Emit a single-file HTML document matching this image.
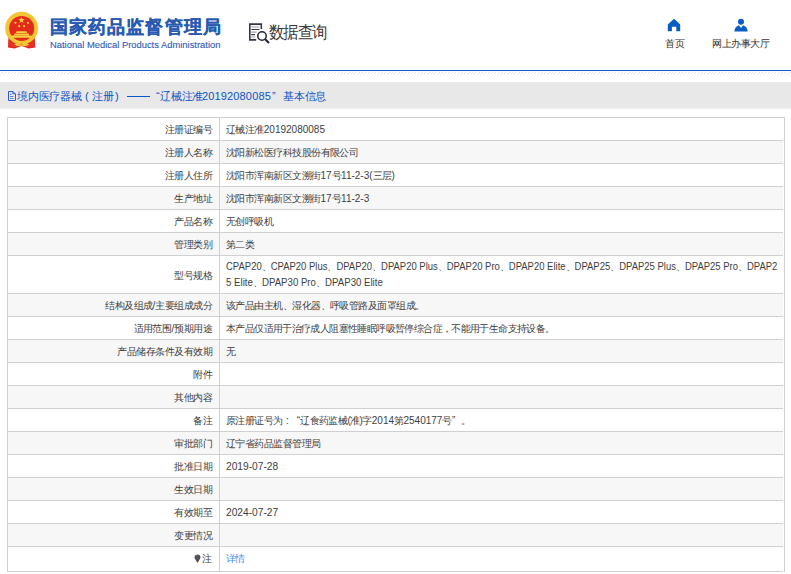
<!DOCTYPE html>
<html><head><meta charset="utf-8">
<style>
*{margin:0;padding:0;box-sizing:border-box}
html,body{width:791px;height:574px;overflow:hidden;background:#fff}
body{position:relative;font-family:"Liberation Sans",sans-serif;color:#333}
.abs{position:absolute;white-space:nowrap}
#icons{position:absolute;left:0;top:0;z-index:5}
#t1{left:50px;top:13px;font-size:18px;letter-spacing:1.1px;font-weight:bold;color:#275ab0;-webkit-text-stroke:0.2px #275ab0;line-height:28px}
#t2{left:50px;top:39px;font-size:9.4px;color:#2d5cb0;-webkit-text-stroke:0.12px #2d5cb0;line-height:12px}
#sq{left:269px;top:19.5px;font-size:15px;letter-spacing:-0.7px;color:#3a3a3a;line-height:22px;transform:scaleY(1.1);transform-origin:0 0}
.nav{font-size:9.5px;color:#333;line-height:12px}
.nav i{letter-spacing:-0.45px}
#bar{position:absolute;left:0;top:82px;width:791px;height:26px;background:#e8e8e8;border-bottom:1px solid #eef0f4;box-sizing:content-box}
#bartxt span,#bartxt b{position:absolute;top:89px;white-space:nowrap;font-size:11px;letter-spacing:-0.25px;color:#0a55c8;line-height:15px;font-weight:normal}
#line{position:absolute;left:0;top:70px;width:791px;height:1px;background:#0a5ac2}
.tbl{position:absolute;left:7px;top:117px;width:778px;border:1px solid #d0d0d2;border-bottom:none;padding-right:1px}
.r{position:relative;height:23px;border-bottom:1px solid #d0d0d2;font-size:9.5px;line-height:22px}
.r.e{background:#f7f7f7}
.r .l{position:absolute;left:0;top:0;padding-top:1px;width:212px;height:100%;text-align:right;padding-right:7px;border-right:1px solid #d0d0d2;color:#3e3e3e;white-space:nowrap}
.r .v{position:absolute;left:213px;top:0;padding-top:1px;right:0;height:100%;padding-left:5px;color:#3e3e3e;white-space:nowrap}
.t{display:inline-block;letter-spacing:0;font-size:10px}
.l .t{transform-origin:100% 50%}
.v .t{transform-origin:0 50%}
i{font-style:normal;letter-spacing:-0.55px;font-size:9.5px}
.r.dbl{height:38px}
.r.dbl .l{line-height:37px}
.r.dbl .v{line-height:16.4px;padding-top:2.5px}
.r.last{height:25px}
.r.last .l,.r.last .v{line-height:24px;padding-top:0}
.fw{display:inline-block;width:9.45px;font-weight:normal;letter-spacing:0}
a{color:#3a8ee6;text-decoration:none}
</style></head><body>

<svg id="icons" width="791" height="120" viewBox="0 0 791 120">
  <!-- emblem -->
  <path d="M8.5 37 L8 47.5 L14.5 48.5 L21.6 46 L28.7 48.5 L35.2 47.5 L34.7 37 Z" fill="#dd2a1e"/>
  <circle cx="21.6" cy="28.2" r="16.4" fill="#f3c534"/>
  <circle cx="21.7" cy="28.4" r="12.5" fill="#e42a1d"/>
  <polygon points="21.5,16.6 22.3,19 24.8,19 22.8,20.5 23.5,22.9 21.5,21.4 19.5,22.9 20.2,20.5 18.2,19 20.7,19" fill="#f7d33c"/>
  <circle cx="15.4" cy="22.8" r="1.1" fill="#f7d33c"/>
  <circle cx="28" cy="22.8" r="1.1" fill="#f7d33c"/>
  <circle cx="19.2" cy="26.2" r="1.1" fill="#f7d33c"/>
  <circle cx="24.1" cy="26.2" r="1.1" fill="#f7d33c"/>
  <path d="M16.5 31.2 H26.5 L27 33 H16 Z M14.5 33.4 H28.7 L29.2 35.2 H14 Z M11.5 35.6 H31.8 V37.8 H11.5 Z" fill="#f6cf40"/>
  <path d="M8.5 40 Q12 44.5 17 43.5 L17 47 Q12 47.5 9 45.5 Z M34.7 40 Q31.2 44.5 26.2 43.5 L26.2 47 Q31.2 47.5 34.2 45.5 Z" fill="#e8322a"/>
  <path d="M14 44.2 Q17.5 41.5 21.6 43.6 Q25.7 41.5 29.2 44.2 Q25.7 47.2 21.6 45.6 Q17.5 47.2 14 44.2 Z" fill="#f3c836"/>
  <circle cx="21.6" cy="44.6" r="1.3" fill="#e8a020"/>
  <!-- data query icon -->
  <path d="M261.3 29 V24.1 H249.8 V39.9 H256.2" fill="none" stroke="#34344a" stroke-width="1.6"/>
  <path d="M251.3 27 H259.6 M251.3 32.1 H256.5 M251.3 37 H255" stroke="#a0a0aa" stroke-width="1.1"/>
  <path d="M251.3 29.5 H259.6 M251.3 34.6 H255" stroke="#3a3a4c" stroke-width="1.1"/>
  <circle cx="262" cy="36" r="4.2" fill="#fff" stroke="#23233a" stroke-width="1.5"/>
  <path d="M265.2 39.3 L269 43" stroke="#23233a" stroke-width="2.1"/>
  <!-- house -->
  <path d="M667.8 24.6 L674 18.8 L680.2 24.6 V31.2 H676.3 V26.8 H671.9 V31.2 H667.8 Z" fill="#075cc6"/>
  <!-- person -->
  <circle cx="741" cy="21.8" r="3" fill="#075cc6"/>
  <path d="M734.3 31.4 Q734.8 26.6 738.8 25.2 L741 27.9 L743.2 25.2 Q747.2 26.6 747.7 31.4 Z" fill="#075cc6"/>
  <!-- doc icon in bar -->
  <path d="M8.5 91.5 H13 L15.5 94 V100.5 H8.5 Z" fill="none" stroke="#2a5fd0" stroke-width="1"/>
  <path d="M12.8 91.8 V93.8 H15.2" fill="none" stroke="#2a5fd0" stroke-width="1"/>
  <path d="M10 94.5 H11.5 M10 96.5 H13.5 M10 98.5 H13.5" stroke="#6a7fd8" stroke-width="1"/>
</svg>

<div id="t1" class="abs">国家药品监督管理局</div>
<div id="t2" class="abs">National Medical Products Administration</div>
<div id="sq" class="abs">数据查询</div>
<div class="abs nav" style="left:665px;top:38px"><i>首页</i></div>
<div class="abs nav" style="left:712px;top:38px"><i>网上办事大厅</i></div>

<div id="line"></div>
<svg id="hatch" width="791" height="3" style="position:absolute;left:0;top:72px"><defs><pattern id="hp" width="10" height="3" patternUnits="userSpaceOnUse"><path d="M2 0h1v1h-1z M1 1h1v1h-1z M5 0h1v1h-1z M4 1h1v1h-1z M9 0h1v1h-1z M8 1h1v1h-1z" fill="#e2e2e2"/><path d="M0 2h1v1h-1z M3 2h1v1h-1z M7 2h1v1h-1z" fill="#f7f7f7"/></pattern></defs><rect width="791" height="3" fill="url(#hp)"/></svg>
<div id="bar"></div>
<div id="bartxt">
 <span style="left:17px">境内医疗器械</span>
 <span style="left:85px;font-family:'Liberation Sans'">(</span>
 <span style="left:92px">注册</span>
 <span style="left:115px;font-family:'Liberation Sans'">)</span>
 <b style="left:127px;top:96px;width:23px;height:1px;background:#0a55c8"></b>
 <span style="left:156px">“</span>
 <span style="left:160px">辽械注准</span>
 <span style="left:202px;letter-spacing:0.15px">20192080085</span>
 <span style="left:272px">”</span>
 <span style="left:283px">基本信息</span>
</div>

<div class="tbl">
 <div class="r"><div class="l"><span class="t" style=""><i>注册证编号</i></span></div><div class="v"><span class="t" style=""><i>辽械注准</i>20192080085</span></div></div>
 <div class="r e"><div class="l"><span class="t" style=""><i>注册人名称</i></span></div><div class="v"><span class="t" style=""><i>沈阳新松医疗科技股份有限公司</i></span></div></div>
 <div class="r"><div class="l"><span class="t" style=""><i>注册人住所</i></span></div><div class="v"><span class="t" style=""><i>沈阳市浑南新区文溯街</i>17<i>号</i>11-2-3(<i>三层</i>)</span></div></div>
 <div class="r e"><div class="l"><span class="t" style=""><i>生产地址</i></span></div><div class="v"><span class="t" style=""><i>沈阳市浑南新区文溯街</i>17<i>号</i>11-2-3</span></div></div>
 <div class="r"><div class="l"><span class="t" style=""><i>产品名称</i></span></div><div class="v"><span class="t" style=""><i>无创呼吸机</i></span></div></div>
 <div class="r e"><div class="l"><span class="t" style=""><i>管理类别</i></span></div><div class="v"><span class="t" style=""><i>第二类</i></span></div></div>
 <div class="r dbl"><div class="l"><span class="t" style=""><i>型号规格</i></span></div><div class="v"><span class="t" style="transform:scaleX(0.9485)">CPAP20<i>、</i>CPAP20 Plus<i>、</i>DPAP20<i>、</i>DPAP20 Plus<i>、</i>DPAP20 Pro<i>、</i>DPAP20 Elite<i>、</i>DPAP25<i>、</i>DPAP25 Plus<i>、</i>DPAP25 Pro<i>、</i>DPAP2</span><br><span class="t" style="transform:scaleX(0.965)">5 Elite<i>、</i>DPAP30 Pro<i>、</i>DPAP30 Elite</span></div></div>
 <div class="r e"><div class="l"><span class="t" style=""><i>结构及组成</i>/<i>主要组成成分</i></span></div><div class="v"><span class="t" style=""><i>该产品由主机、湿化器、呼吸管路及面罩组成。</i></span></div></div>
 <div class="r"><div class="l"><span class="t" style=""><i>适用范围</i>/<i>预期用途</i></span></div><div class="v"><span class="t" style="transform:scaleX(0.9935)"><i>本产品仅适用于治疗成人阻塞性睡眠呼吸暂停综合症，不能用于生命支持设备。</i></span></div></div>
 <div class="r e"><div class="l"><span class="t" style=""><i>产品储存条件及有效期</i></span></div><div class="v"><span class="t" style=""><i>无</i></span></div></div>
 <div class="r"><div class="l"><span class="t" style=""><i>附件</i></span></div><div class="v"></div></div>
 <div class="r e"><div class="l"><span class="t" style=""><i>其他内容</i></span></div><div class="v"></div></div>
 <div class="r"><div class="l"><span class="t" style=""><i>备注</i></span></div><div class="v"><span class="t" style=""><i>原注册证号为</i><b class="fw" style="text-align:center">:</b><b class="fw" style="text-align:right;width:8px">“</b><i>辽食药监械</i><span style="letter-spacing:-0.6px">(</span><i>准</i><span style="letter-spacing:-0.6px">)</span><i>字</i>2014<i>第</i>2540177<i>号</i><b class="fw">”</b><b class="fw">。</b></span></div></div>
 <div class="r e"><div class="l"><span class="t" style=""><i>审批部门</i></span></div><div class="v"><span class="t" style=""><i>辽宁省药品监督管理局</i></span></div></div>
 <div class="r"><div class="l"><span class="t" style=""><i>批准日期</i></span></div><div class="v"><span class="t" style="transform:scaleX(1.02)">2019-07-28</span></div></div>
 <div class="r e"><div class="l"><span class="t" style=""><i>生效日期</i></span></div><div class="v"></div></div>
 <div class="r"><div class="l"><span class="t" style=""><i>有效期至</i></span></div><div class="v"><span class="t" style="transform:scaleX(1.02)">2024-07-27</span></div></div>
 <div class="r e"><div class="l"><span class="t" style=""><i>变更情况</i></span></div><div class="v"></div></div>
 <div class="r last"><div class="l"><span class="t" style=""><svg width="7" height="9" viewBox="0 0 7 9" style="vertical-align:-1px;margin-right:0.5px"><path d="M3.5 0.4 C5.3 0.4 6.5 1.7 6.5 3.3 C6.5 5 5 6 4 8.4 H3 C2 6 0.5 5 0.5 3.3 C0.5 1.7 1.7 0.4 3.5 0.4 Z" fill="#505058"/><path d="M2 2.5 Q2.3 1.5 3.2 1.3" stroke="#8a8a9a" stroke-width="0.7" fill="none"/></svg><i style="margin-right:1px">注</i></span></div><div class="v"><span class="t" style=""><a><i>详情</i></a></span></div></div>
</div>
</body></html>
